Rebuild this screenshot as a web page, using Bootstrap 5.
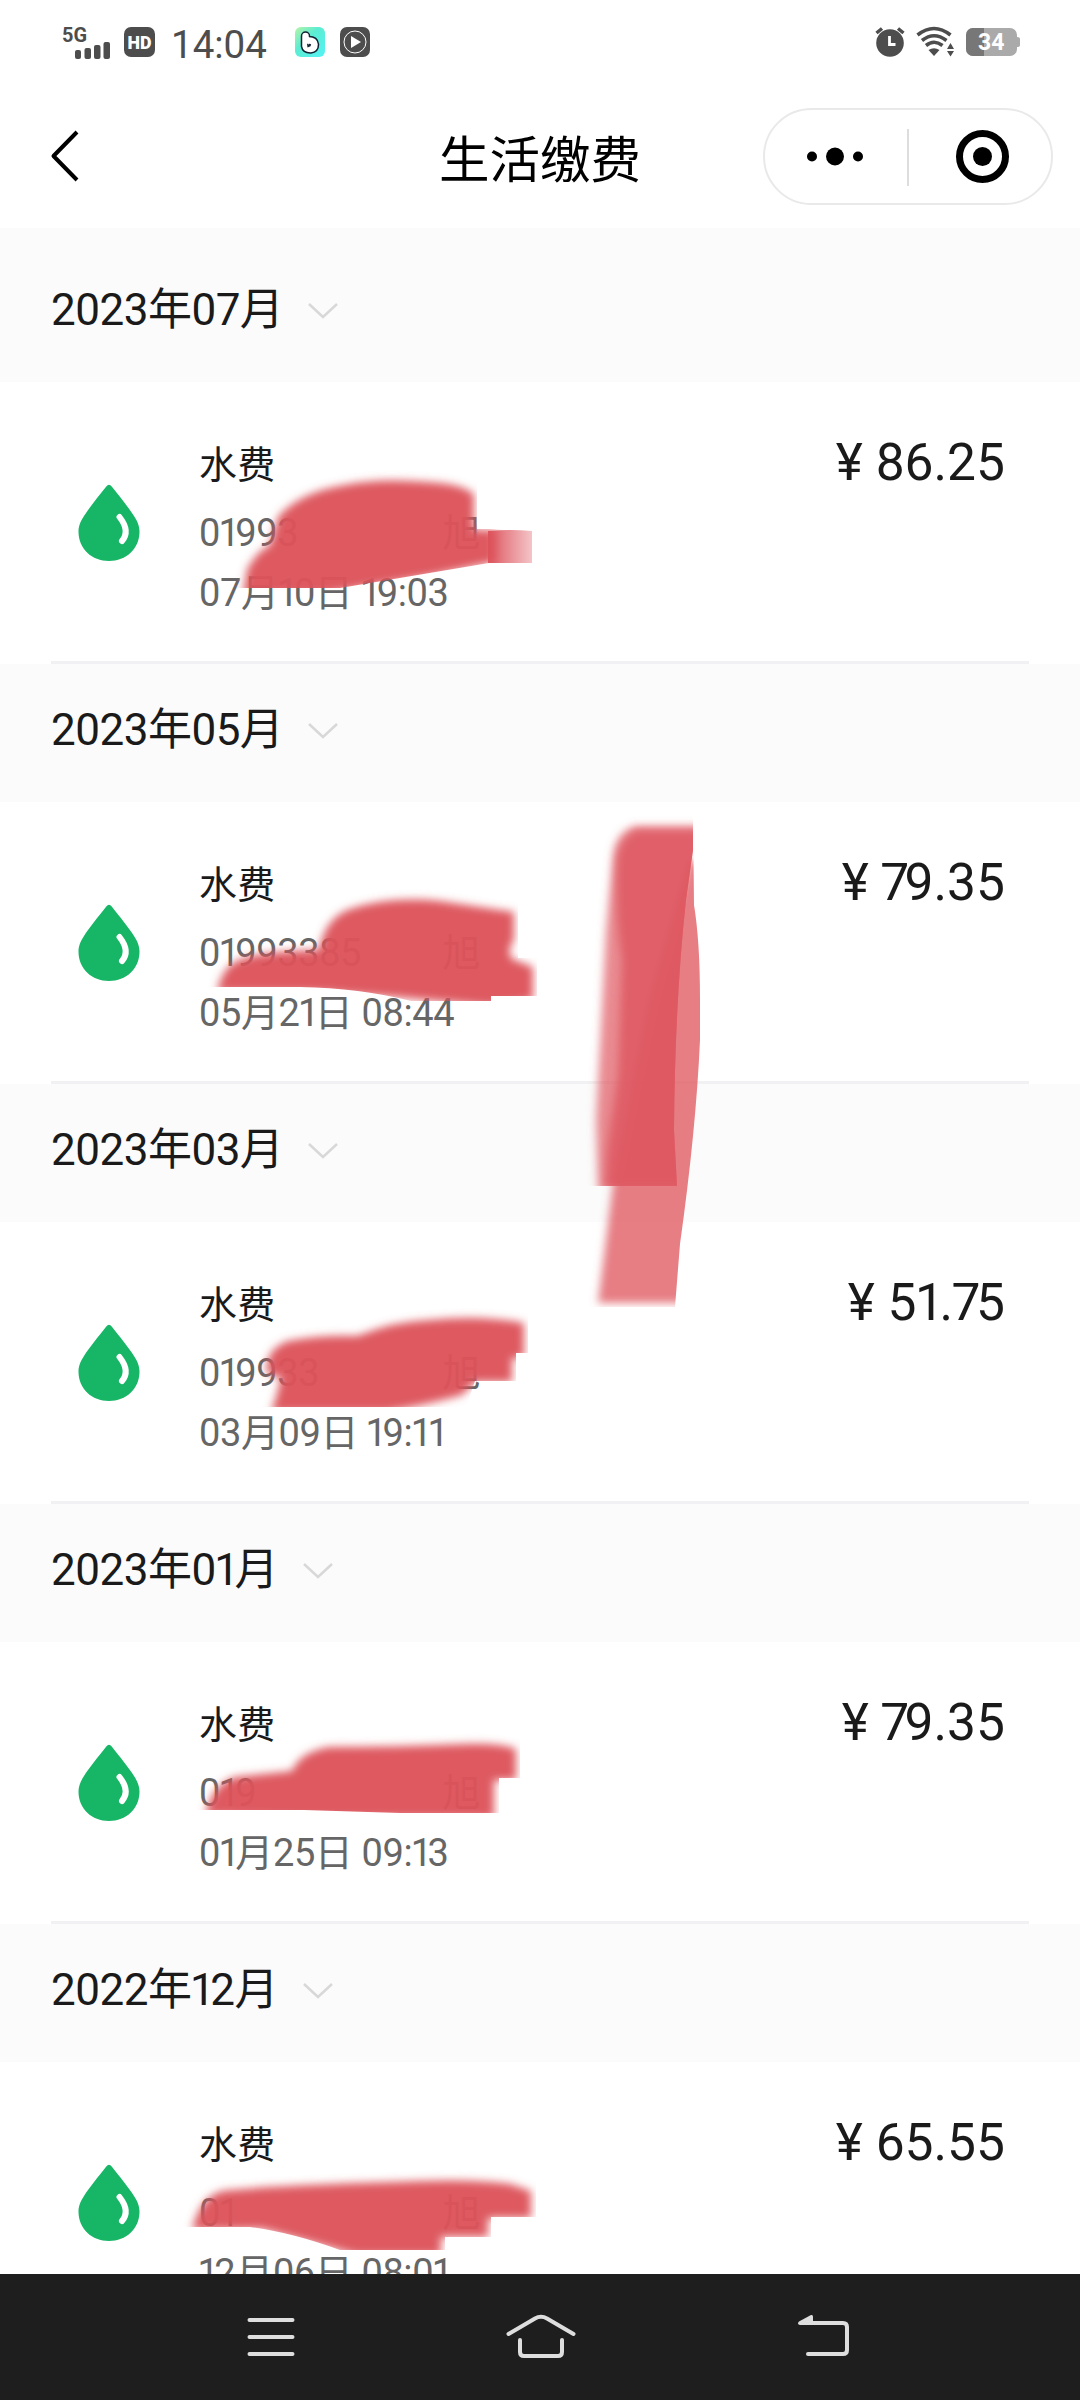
<!DOCTYPE html>
<html lang="zh-CN">
<head>
<meta charset="utf-8">
<meta name="viewport" content="width=device-width, initial-scale=1">
<title>生活缴费</title>
<link href="https://cdn.jsdelivr.net/npm/bootstrap@5.3.0/dist/css/bootstrap.min.css" rel="stylesheet">
<style>
body{font-family:Roboto,"Noto Sans CJK SC",sans-serif;color:#1a1a1a;background:#fff}
svg{display:block;flex:none;overflow:visible}
.phone{width:1080px;height:2400px}
.status-bar{flex:none;height:84px;padding:0 60px 0 62px;color:#4d4d4d}
.clock{font-size:38.500px;line-height:60px;margin:6px 28px 0 16px}
.title-bar{flex:none;height:144px;padding:0 27px 0 51px}
.page-title{font:400 50.500px/72px "Noto Sans CJK SC",sans-serif;color:#000}
.side{width:290px}
.capsule{width:290px;height:97px;border:2px solid #e9e9e9;border-radius:49px}
.bills{flex:1 1 0;min-height:0}
.month{background:#fbfbfb;height:138px;padding:36px 51px 42px;font-size:44px;line-height:60px;letter-spacing:-.5px}
.month-first{height:154px;padding-top:52px}
.month svg{margin-left:23px;margin-top:1px}
.bill{height:282px;padding:0 51px}
.bill-body{border-bottom:3px solid #f1f1f3;padding:51px 24px 0 27px}
.drop{margin-top:51px}
.info{margin-left:60px;padding-top:6px}
.kind{font-size:38px;line-height:52px;margin-bottom:12px;margin-left:-1px;letter-spacing:.2px}
.detail{font-size:38px;line-height:60px;letter-spacing:-.4px;color:#666;width:281px;margin-left:-1px;white-space:nowrap}
.amount{font-size:51.500px;line-height:60px}
i{font-style:normal;letter-spacing:-4.500px;margin-left:-1.500px}
.nav-keys{flex:none;height:126px;background:#1e1e1e;padding-left:235px}
.ink{left:0;top:0;pointer-events:none}
</style>
</head>
<body>
<svg width="0" height="0" class="position-absolute"><defs>
<symbol id="drop" viewBox="0 0 62 78"><path d="M28.300 2.500Q31-1 33.700 2.500C42 13 51 24 56 32C60 38 61.500 43 61.500 47.500C61.500 65 48 77 31 77S.5 65 .5 47.500C.5 43 2 38 6 32C11 24 20 13 28.300 2.500Z" fill="#17b566"/><path d="M41.500 33Q52.500 47 44 57" fill="none" stroke="#fff" stroke-width="6" stroke-linecap="round"/></symbol>
<symbol id="down" viewBox="0 0 34 20"><path d="M3 3L17 16L31 3" fill="none" stroke="#d8d8d8" stroke-width="2.500"/></symbol>
</defs></svg>

<div class="phone d-flex flex-column position-relative overflow-hidden">
  <div class="status-bar d-flex align-items-center">
    <svg width="50" height="34" viewBox="0 0 50 34" fill="#4d4d4d"><text x="0" y="17" font-size="20" font-weight="700" textLength="25" lengthAdjust="spacingAndGlyphs">5G</text><rect x="13" y="25" width="6" height="9" rx="2"/><rect x="22.500" y="23" width="6.500" height="11" rx="2"/><rect x="32" y="20" width="6.500" height="14" rx="2"/><rect x="41.500" y="17" width="6.500" height="17" rx="2"/></svg>
    <svg style="margin-left:12px" width="31" height="30" viewBox="0 0 31 30"><rect width="31" height="30" rx="7" fill="#4d4d4d"/><text x="3.500" y="22" font-size="19" font-weight="900" fill="#fff" textLength="24" lengthAdjust="spacingAndGlyphs">HD</text></svg>
    <div class="clock">14:04</div>
    <svg width="30" height="30" viewBox="0 0 30 30"><defs><linearGradient id="mint" x1="0" y1="0" x2="1" y2="1"><stop stop-color="#b9f3a6"/><stop offset=".4" stop-color="#5cedd2"/><stop offset="1" stop-color="#55f3f5"/></linearGradient></defs><rect width="30" height="30" rx="6" fill="url(#mint)"/><path d="M10.500 9V19Q11 22 15.500 22Q19.500 21.500 19.500 17.500Q19 13.500 14 13.500" fill="none" stroke="#123" stroke-width="9.500" stroke-linecap="round" stroke-linejoin="round"/><path d="M10.500 9V19Q11 22 15.500 22Q19.500 21.500 19.500 17.500Q19 13.500 14 13.500" fill="none" stroke="#fff" stroke-width="6.500" stroke-linecap="round" stroke-linejoin="round"/><path d="M12 16.500L16 19L12.500 20.500Z" fill="#123"/></svg>
    <svg style="margin-left:15px" width="30" height="30" viewBox="0 0 30 30"><rect width="30" height="30" rx="7" fill="#4d4d4d"/><circle cx="15" cy="15" r="11" fill="none" stroke="#fff"/><path d="M11 9L21 15L11 21Z" fill="#fff"/></svg>
    <svg class="ms-auto" width="30" height="30" viewBox="0 0 30 30"><circle cx="15" cy="16" r="13.800" fill="#4d4d4d"/><path d="M1.500 6L7 1.500M28.500 6L23 1.500" stroke="#4d4d4d" stroke-width="3.500"/><path d="M14.500 9V17.500H20.500" fill="none" stroke="#fff" stroke-width="2.800"/></svg>
    <svg style="margin-left:11px" width="40" height="30" viewBox="0 0 40 30"><g fill="none" stroke="#4d4d4d" stroke-width="3.600"><path d="M1.500 8Q18 -5 34.500 8"/><path d="M6 13.500Q18 4 30.500 13.500"/><path d="M10 18.500Q18 12 26.500 18.500"/></g><path d="M12.500 23Q18 19.500 23.500 23L18 29Z" fill="#4d4d4d"/><path d="M30 30V15H40V30Z" fill="#fff"/><path d="M34.500 16L38 22H31ZM31 24H38L34.500 29.500Z" fill="#4d4d4d"/></svg>
    <svg style="margin-left:10px" width="54" height="28" viewBox="0 0 54 28"><defs><clipPath id="cell"><rect width="51" height="28" rx="7"/></clipPath></defs><path d="M50 9H51Q54 9 54 11V17Q54 19 51 19H50Z" fill="#aaa"/><g clip-path="url(#cell)"><path d="M0 0H51V28H0Z" fill="#aaa"/><path d="M0 0H18V28H0Z" fill="#777"/></g><text x="12" y="22" font-size="23" font-weight="700" fill="#fff">34</text></svg>
  </div>

  <header class="title-bar d-flex align-items-center justify-content-between">
    <div class="side"><svg width="28" height="52" viewBox="0 0 28 52"><path d="M26 2L2.500 26L26 50" fill="none" stroke="#000" stroke-width="4" stroke-linejoin="round"/></svg></div>
    <h1 class="page-title m-0" style="margin-right:24px!important">生活缴费</h1>
    <div class="capsule"><svg width="286" height="93" viewBox="0 0 286 93"><circle cx="47" cy="46.500" r="5"/><circle cx="70" cy="46.500" r="9"/><circle cx="93" cy="46.500" r="5"/><path d="M143 19V76" stroke="#ddd" stroke-width="2"/><circle cx="217.500" cy="46.500" r="23" fill="none" stroke="#000" stroke-width="7"/><circle cx="217.500" cy="46.500" r="9.500"/></svg></div>
  </header>

  <main class="bills overflow-hidden">
    <div class="month month-first d-flex align-items-center"><span>2023年07月</span><svg width="34" height="20"><use href="#down"/></svg></div>
    <div class="bill"><div class="bill-body d-flex align-items-start h-100"><svg class="drop" width="62" height="78"><use href="#drop"/></svg><div class="info"><div class="kind">水费</div><div class="detail d-flex justify-content-between"><span>0<i>1</i>993</span><span>旭</span></div><div class="detail">07月<i>1</i>0日 <i>1</i>9:03</div></div><div class="amount ms-auto">¥ 86.25</div></div></div>

    <div class="month d-flex align-items-center"><span>2023年05月</span><svg width="34" height="20"><use href="#down"/></svg></div>
    <div class="bill"><div class="bill-body d-flex align-items-start h-100"><svg class="drop" width="62" height="78"><use href="#drop"/></svg><div class="info"><div class="kind">水费</div><div class="detail d-flex justify-content-between"><span>0<i>1</i>993385</span><span>旭</span></div><div class="detail">05月2<i>1</i>日 08:44</div></div><div class="amount ms-auto">¥ <i>7</i>9.35</div></div></div>

    <div class="month d-flex align-items-center"><span>2023年03月</span><svg width="34" height="20"><use href="#down"/></svg></div>
    <div class="bill"><div class="bill-body d-flex align-items-start h-100"><svg class="drop" width="62" height="78"><use href="#drop"/></svg><div class="info"><div class="kind">水费</div><div class="detail d-flex justify-content-between"><span>0<i>1</i>9933</span><span>旭</span></div><div class="detail">03月09日 <i>1</i>9:<i>11</i></div></div><div class="amount ms-auto">¥ 5<i>1</i>.<i>7</i>5</div></div></div>

    <div class="month d-flex align-items-center"><span>2023年0<i>1</i>月</span><svg width="34" height="20"><use href="#down"/></svg></div>
    <div class="bill"><div class="bill-body d-flex align-items-start h-100"><svg class="drop" width="62" height="78"><use href="#drop"/></svg><div class="info"><div class="kind">水费</div><div class="detail d-flex justify-content-between"><span>0<i>1</i>9</span><span>旭</span></div><div class="detail">0<i>1</i>月25日 09:<i>1</i>3</div></div><div class="amount ms-auto">¥ <i>7</i>9.35</div></div></div>

    <div class="month d-flex align-items-center"><span>2022年<i>1</i>2月</span><svg width="34" height="20"><use href="#down"/></svg></div>
    <div class="bill"><div class="bill-body d-flex align-items-start h-100"><svg class="drop" width="62" height="78"><use href="#drop"/></svg><div class="info"><div class="kind">水费</div><div class="detail d-flex justify-content-between"><span>0<i>1</i></span><span>旭</span></div><div class="detail"><i>1</i>2月06日 08:0<i>1</i></div></div><div class="amount ms-auto">¥ 65.55</div></div></div>
  </main>

  <nav class="nav-keys d-flex align-items-center">
    <svg width="72" height="50" viewBox="0 0 72 50"><path d="M13 8H56M13 25H56M13 42H56" transform="translate(1.500 0)" stroke="#dedede" stroke-width="4" stroke-linecap="round"/></svg>
    <svg style="margin-left:198px" width="72" height="50" viewBox="0 0 72 50" fill="none" stroke="#dedede" stroke-width="4" stroke-linecap="round" stroke-linejoin="round"><path d="M3.500 22L30 6.500Q36 3 42 6.500L68.500 22M15 28V40Q15 44 19 44H53Q57 44 57 40V28"/></svg>
    <svg style="margin-left:211px" width="72" height="50" viewBox="0 0 72 50"><path d="M18 11H55Q59 11 59 15V38Q59 42 55 42H20" fill="none" stroke="#dedede" stroke-width="4" stroke-linecap="round"/><path d="M11 9.500L23 3Q25 2.500 25 4.500V13H12Q8.500 12 11 9.500Z" fill="#dedede"/></svg>
  </nav>

  <svg class="ink position-absolute" width="1080" height="2274" viewBox="0 0 1080 2274">
    <defs>
      <filter id="soft" x="-10%" y="-20%" width="120%" height="140%"><feGaussianBlur stdDeviation="4"/></filter>
      <linearGradient id="fade"><stop stop-color="#dd525b"/><stop offset="1" stop-color="#dd525b" stop-opacity=".35"/></linearGradient>
      <clipPath id="c1"><path d="M230 470H477V529H532V563H489Q400 578 340 588H230Z"/></clipPath>
      <clipPath id="c2"><path d="M200 885H518V958H537V996H491V1001H411Q360 988 300 987H200Z"/></clipPath>
      <clipPath id="c3"><path d="M250 1305H528V1353H516V1381H475L466 1407H250Z"/></clipPath>
      <clipPath id="c4"><path d="M195 1730H520V1778H499V1813H400L304 1810H195Z"/></clipPath>
      <clipPath id="c5"><path d="M180 2165H536V2217H491V2237H445V2250H340Q290 2232 250 2227H180Z"/></clipPath>
      <clipPath id="cv"><path d="M580 810H693L694 905Q700 941 700 1000V1040Q696 1130 680 1244L675 1307H580Z"/></clipPath>
      <clipPath id="cd"><path d="M580 810H693V850L686 900Q675 1000 674 1130L677 1186H580Z"/></clipPath>
    </defs>
    <g fill="#dd525b" fill-opacity=".96">
      <g clip-path="url(#c1)"><path filter="url(#soft)" d="M270 545Q255 553 247 570L243 595H320L430 576L495 562V530H474V494Q462 485 440 483Q380 477 345 485Q300 492 278 517Z"/><path d="M488 531Q510 529 532 531V563H488Z" fill="url(#fade)"/></g>
      <g clip-path="url(#c2)"><path filter="url(#soft)" d="M217 992Q222 968 237 961Q258 951 319 950Q325 918 350 909Q390 896 440 901L480 907L514 912V940Q506 951 512 959L533 967V1000L490 1006L405 998L320 992Z"/></g>
      <g clip-path="url(#c3)"><path filter="url(#soft)" d="M267 1374Q264 1350 288 1341Q320 1335 357 1336Q395 1321 430 1320Q480 1315 524 1323V1358H512V1382H475L462 1395Q430 1404 385 1412H271Q277 1397 281 1377Z"/></g>
      <g clip-path="url(#c4)"><path filter="url(#soft)" d="M205 1815Q212 1785 235 1777L292 1771Q300 1752 329 1747Q395 1747 464 1744Q500 1743 516 1749V1780H494V1818H304Z"/></g>
      <g clip-path="url(#c5)"><path filter="url(#soft)" d="M192 2230Q200 2197 222 2191Q260 2186 393 2182Q470 2178 510 2184L531 2191V2218H488V2237H441V2255H357Q310 2242 262 2229Z"/></g>
    </g>
    <g clip-path="url(#cv)"><path filter="url(#soft)" d="M690 860H710V1303H598L613 1184L650 1000Z" fill="#df5962" fill-opacity=".78"/></g>
    <g clip-path="url(#cd)"><path filter="url(#soft)" d="M705 826H635Q616 832 613 855L606 930L596 1120L598 1192H705Z" fill="#df5962" fill-opacity=".7"/><path filter="url(#soft)" d="M705 830H637Q620 838 617 860Q615 920 622 960L618 1075L607 1150L605 1188H705Z" fill="#de5761" fill-opacity=".85"/></g>
  </svg>
</div>
<script src="https://cdn.jsdelivr.net/npm/bootstrap@5.3.0/dist/js/bootstrap.bundle.min.js"></script>
</body>
</html>
